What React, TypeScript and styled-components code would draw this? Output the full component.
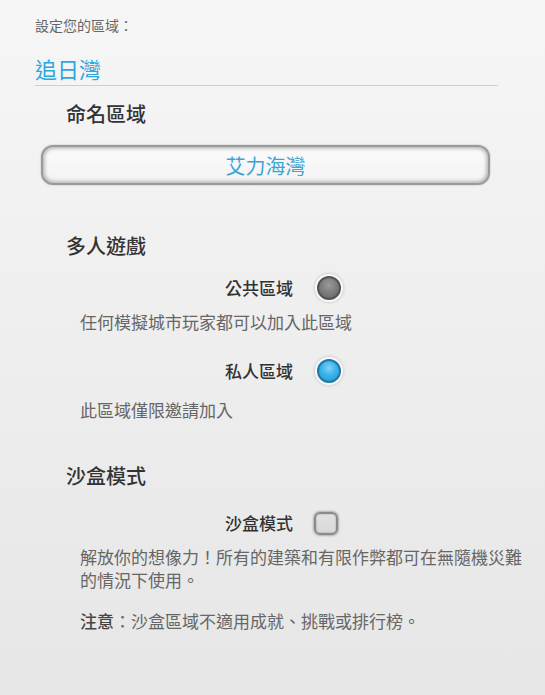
import React from "react";
import styled, { createGlobalStyle } from "styled-components";

const Global = createGlobalStyle`
  html, body { margin: 0; padding: 0; }
  body {
    width: 545px;
    height: 695px;
    overflow: hidden;
    background: linear-gradient(180deg, #f6f6f6 0%, #eeeeee 50%, #e6e6e6 100%);
    font-family: "Noto Sans CJK TC", "Noto Sans", sans-serif;
  }
`;

const Page = styled.div`
  padding: 15px 15px 0 35px;
  display: flex;
  flex-direction: column;
`;

const Subtitle = styled.div`
  font-size: 14px;
  line-height: 20px;
  color: #666;
`;

const Title = styled.div`
  margin-top: 18px;
  margin-right: 32px;
  font-size: 22px;
  line-height: 30px;
  color: #2aa8df;
  padding-bottom: 2px;
  border-bottom: 1px solid #cfcfcf;
`;

const Heading = styled.div<{ $mt: number }>`
  margin-top: ${(p) => p.$mt}px;
  padding-left: 31px;
  font-size: 20px;
  line-height: 28px;
  font-weight: 500;
  color: #333;
`;

const NameInput = styled.div`
  margin: 17px 40px 0 6px;
  height: 40px;
  box-sizing: border-box;
  border-radius: 12px;
  border: 2px solid #9a9a9a;
  background: linear-gradient(180deg, #fbfbfb 0%, #f3f3f3 100%);
  box-shadow: inset 0 0 4px 1px rgba(0,0,0,0.35), 0 0 2px rgba(0,0,0,0.25);
  display: flex;
  align-items: center;
  justify-content: center;
  font-size: 20px;
  color: #3aa5d6;
`;

const OptionRow = styled.div<{ $mt: number }>`
  margin-top: ${(p) => p.$mt}px;
  display: grid;
  grid-template-columns: 258px auto;
  column-gap: 24px;
  align-items: center;
  height: 28px;
`;

const OptionLabel = styled.div`
  text-align: right;
  font-size: 17px;
  line-height: 28px;
  font-weight: 500;
  color: #333;
`;

const Radio = styled.div<{ $on?: boolean }>`
  width: 24px;
  height: 24px;
  box-sizing: border-box;
  border-radius: 50%;
  border: 2px solid ${(p) => (p.$on ? "#2179a6" : "#545454")};
  background: ${(p) =>
    p.$on
      ? "radial-gradient(circle at 50% 35%, #7fd3f7 0%, #3cb3ea 45%, #1f95d0 100%)"
      : "radial-gradient(circle at 50% 35%, #9a9a9a 0%, #7c7c7c 50%, #626262 100%)"};
  box-shadow: 0 0 0 2px rgba(255,255,255,0.85), 0 0 3px 3px rgba(0,0,0,0.12);
`;

const Checkbox = styled.div`
  margin-left: -3px;
  width: 24px;
  height: 23px;
  box-sizing: border-box;
  border-radius: 6px;
  border: 2px solid #8a8a8a;
  background: linear-gradient(180deg, #e2e2e2 0%, #d8d8d8 100%);
  box-shadow: 0 0 2px 1px rgba(0,0,0,0.25), inset 0 0 2px rgba(0,0,0,0.3);
`;

const Desc = styled.div<{ $mt: number }>`
  margin-top: ${(p) => p.$mt}px;
  padding-left: 45px;
  font-size: 17px;
  line-height: 23px;
  color: #666;
`;

const Strong = styled.span`
  font-weight: 500;
  color: #444;
`;

export default function App() {
  return (
    <>
      <Global />
      <Page>
        <Subtitle>設定您的區域：</Subtitle>
        <Title>追日灣</Title>

        <Heading $mt={14}>命名區域</Heading>
        <NameInput>艾力海灣</NameInput>

        <Heading $mt={47}>多人遊戲</Heading>
        <OptionRow $mt={14}>
          <OptionLabel>公共區域</OptionLabel>
          <Radio />
        </OptionRow>
        <Desc $mt={8}>任何模擬城市玩家都可以加入此區域</Desc>
        <OptionRow $mt={24}>
          <OptionLabel>私人區域</OptionLabel>
          <Radio $on />
        </OptionRow>
        <Desc $mt={13}>此區域僅限邀請加入</Desc>

        <Heading $mt={41}>沙盒模式</Heading>
        <OptionRow $mt={19}>
          <OptionLabel>沙盒模式</OptionLabel>
          <Checkbox />
        </OptionRow>
        <Desc $mt={8}>
          解放你的想像力！所有的建築和有限作弊都可在無隨機災難的情況下使用。
        </Desc>
        <Desc $mt={18}>
          <Strong>注意</Strong>：沙盒區域不適用成就、挑戰或排行榜。
        </Desc>
      </Page>
    </>
  );
}
